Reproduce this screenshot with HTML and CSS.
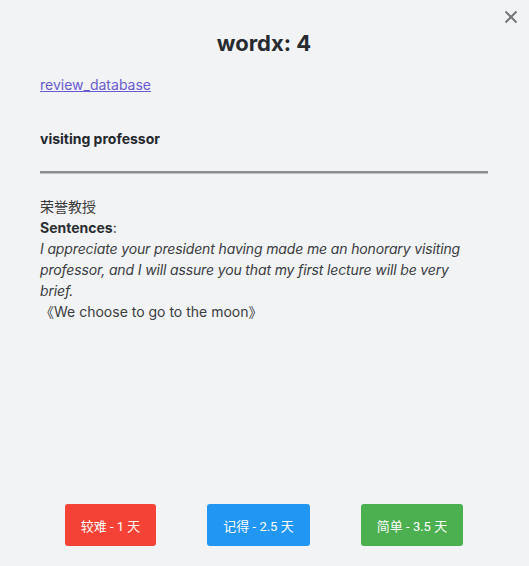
FILE: index.html
```html
<!DOCTYPE html>
<html>
<head>
<meta charset="utf-8">
<link rel="stylesheet" href="styles.css">
</head>
<body>
<div class="page">
  <button class="close" aria-label="close">
    <svg width="14" height="14" viewBox="0 0 14 14"><path d="M1.5 1.5 L12.5 12.5 M12.5 1.5 L1.5 12.5" stroke="#777" stroke-width="2" fill="none"/></svg>
  </button>
  <h1 class="title">wordx: 4</h1>
  <a class="db-link" href="#">review_database</a>
  <div class="word">visiting professor</div>
  <hr class="divider">
  <div class="content">
    <div class="meaning">荣誉教授</div>
    <div><b>Sentences</b>:</div>
    <div class="sentence">I appreciate your president having made me an honorary visiting professor, and I will assure you that my first lecture will be very brief.</div>
    <div class="source">《We choose to go to the moon》</div>
  </div>
  <div class="actions">
    <button class="btn btn-hard">较难 - 1 天</button>
    <button class="btn btn-remember">记得 - 2.5 天</button>
    <button class="btn btn-easy">简单 - 3.5 天</button>
  </div>
</div>
</body>
</html>
```
FILE: styles.css
```css
html, body {
  margin: 0;
  padding: 0;
  background: #f2f3f5;
}
body {
  font-family: Inter, "Noto Sans CJK SC", sans-serif;
  color: #25282c;
}
.page {
  position: relative;
  min-height: 566px;
  box-sizing: border-box;
  padding: 0 41px 20px 40px;
  display: flex;
  flex-direction: column;
}
.close {
  position: absolute;
  top: 10px;
  right: 11px;
  border: 0;
  background: none;
  padding: 0;
  width: 14px;
  height: 14px;
  line-height: 0;
}
.title {
  margin: 30px 0 0;
  text-align: center;
  font-size: 22px;
  font-weight: 700;
  line-height: 26px;
  color: #272b30;
}
.db-link {
  margin-top: 20px;
  align-self: flex-start;
  font-size: 14px;
  line-height: 18px;
  color: #6a5bd2;
}
.word {
  margin-top: 36px;
  font-size: 14px;
  font-weight: 700;
  line-height: 18px;
  color: #25282c;
}
.divider {
  margin: 23px 0 0;
  border: 0;
  border-top: 2px solid #8d8d8d;
  border-bottom: 1px solid #c0c0c0;
  height: 0;
}
.content {
  margin-top: 22px;
  padding-right: 12px;
  font-size: 14px;
  line-height: 21px;
  color: #2a2d31;
}
.meaning {
  font-family: "Noto Sans CJK SC", sans-serif;
  color: #3a3a3a;
}
.sentence {
  font-style: italic;
  letter-spacing: -0.14px;
  color: #3a3d42;
}
.source {
  color: #3a3d42;
}
.actions {
  margin-top: auto;
  display: flex;
  justify-content: center;
  gap: 51px;
}
.btn {
  height: 42px;
  border: 0;
  border-radius: 3px;
  color: #fff;
  font-family: Roboto, "Noto Sans CJK SC", sans-serif;
  font-size: 13px;
  padding: 0;
}
.btn-hard { background: #f44336; width: 91px; }
.btn-remember { background: #2196f3; width: 103px; }
.btn-easy { background: #4caf50; width: 102px; }
```
